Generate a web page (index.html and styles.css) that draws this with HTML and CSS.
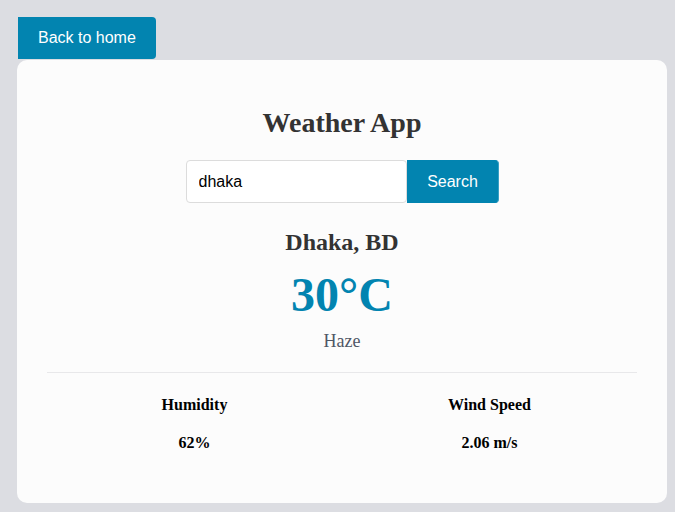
FILE: index.html
```html
<!DOCTYPE html>
<html lang="en">
<head>
<meta charset="utf-8">
<title>Weather App</title>
<link rel="stylesheet" href="styles.css">
</head>
<body>
  <div class="page">
    <button class="back-btn" type="button">Back to home</button>
    <main class="card">
      <h1 class="title">Weather App</h1>
      <form class="search" onsubmit="return false">
        <input class="search-input" type="text" value="dhaka">
        <button class="search-btn" type="submit">Search</button>
      </form>
      <h2 class="city">Dhaka, BD</h2>
      <div class="temp">30°C</div>
      <div class="desc">Haze</div>
      <div class="details">
        <div class="detail">
          <div class="label">Humidity</div>
          <div class="value">62%</div>
        </div>
        <div class="detail">
          <div class="label">Wind Speed</div>
          <div class="value">2.06 m/s</div>
        </div>
      </div>
    </main>
  </div>
</body>
</html>
```
FILE: styles.css
```css
html, body {
  margin: 0;
  padding: 0;
}
body {
  background: #dcdde2;
  font-family: "Liberation Serif", "Times New Roman", serif;
}
.page {
  padding: 17px 8px 0 17px;
  display: flex;
  flex-direction: column;
  align-items: flex-start;
}
.back-btn {
  margin-left: 1px;
  height: 42px;
  padding: 0 20px;
  border: none;
  border-radius: 0 4px 4px 0;
  background: #0284b0;
  color: #fff;
  font-family: "Liberation Sans", Arial, sans-serif;
  font-size: 16px;
  line-height: 18px;
}
.card {
  margin-top: 1px;
  width: 650px;
  box-sizing: border-box;
  background: #fcfcfc;
  border-radius: 10px;
  padding: 46px 30px 50px;
  text-align: center;
  color: #333;
}
.title {
  margin: 0;
  font-size: 28px;
  line-height: 34px;
  font-weight: bold;
}
.search {
  margin-top: 20px;
  display: flex;
  justify-content: center;
}
.search-input {
  width: 221px;
  height: 43px;
  box-sizing: border-box;
  border: 1px solid #dcdcdc;
  border-radius: 4px;
  padding: 0 12px;
  font-family: "Liberation Sans", Arial, sans-serif;
  font-size: 16px;
  color: #000;
  background: #fff;
  margin: 0;
  outline: none;
}
.search-btn {
  width: 92px;
  height: 43px;
  box-sizing: border-box;
  margin: 0 0 0 0;
  border: 1px solid #0284b0;
  border-right-color: #3aa0c4;
  border-radius: 0 4px 4px 0;
  background: #0284b0;
  color: #fff;
  font-family: "Liberation Sans", Arial, sans-serif;
  font-size: 16px;
  padding: 0;
}
.city {
  margin: 25px 0 0;
  font-size: 24px;
  line-height: 28px;
  font-weight: bold;
}
.temp {
  margin-top: 11px;
  font-size: 48px;
  line-height: 56px;
  font-weight: bold;
  color: #0284b0;
}
.desc {
  margin-top: 7px;
  font-size: 18px;
  line-height: 22px;
  color: #4f5766;
}
.details {
  margin-top: 20px;
  border-top: 1px solid #e8e8ea;
  padding-top: 22px;
  display: flex;
}
.detail {
  flex: 1;
  display: flex;
  flex-direction: column;
  gap: 18px;
  color: #000;
  font-size: 16px;
  line-height: 20px;
  font-weight: bold;
}
```
